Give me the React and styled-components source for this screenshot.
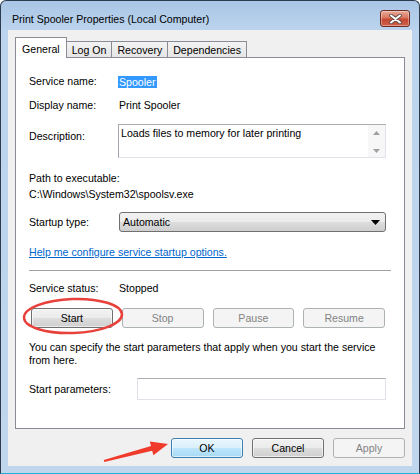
import React from 'react'
import styled, {createGlobalStyle} from 'styled-components'

const GlobalStyle = createGlobalStyle`
  html, body {
    margin: 0;
    padding: 0;
    background: #fff;
  }
  body {
    font-family: "Liberation Sans", Arial, sans-serif;
    font-size: 10.6px;
    color: #000;
  }
`

const Window = styled.div`
  position: relative;
  box-sizing: border-box;
  width: 420px;
  height: 474px;
  display: flex;
  flex-direction: column;
  background: linear-gradient(#a9c6e6 0, #bcd4ed 30px, #bfd6ec 100%);
  border: 1px solid #2d3b4c;
  border-bottom: 1px solid #1eb0da;
  border-radius: 6px 6px 0 0;
  overflow: hidden;
`

const TitleBar = styled.div`
  height: 29px;
  display: flex;
  align-items: flex-start;
  justify-content: space-between;
  padding: 9px 9px 0 11px;
  box-sizing: border-box;
`

const Title = styled.div`
  font-size: 10.6px;
  line-height: 20px;
  margin-top: -1px;
  color: #000;
  white-space: nowrap;
`

const CloseButton = styled.div`
  width: 30px;
  height: 17px;
  box-sizing: border-box;
  border: 1px solid #6e2c24;
  border-radius: 3px;
  background: linear-gradient(#e9ab9c 0%, #d9755f 45%, #c54832 55%, #d0604a 100%);
  box-shadow: inset 0 0 0 1px rgba(255, 255, 255, 0.35);
  display: flex;
  align-items: center;
  justify-content: center;
`

const Client = styled.div`
  flex: 1;
  margin: 0 7px 7px;
  background: #f0f0f0;
  padding: 7px 7px 0;
  display: flex;
  flex-direction: column;
`

const TabRow = styled.div`
  display: flex;
  align-items: flex-end;
  height: 20px;
  position: relative;
  z-index: 1;
`

const Tab = styled.div`
  box-sizing: border-box;
  height: ${p => (p.$active ? '21px' : '16px')};
  margin-bottom: ${p => (p.$active ? '-1px' : '0')};
  margin-right: -1px;
  padding: ${p => (p.$active ? '4px 6px 0' : '1px 5px 0')};
  border: 1px solid #898c95;
  border-bottom: none;
  background: ${p => (p.$active ? '#fff' : 'linear-gradient(#f3f3f3, #e5e5e5)')};
  white-space: nowrap;
  line-height: 14px;
  position: relative;
  z-index: ${p => (p.$active ? 2 : 1)};
`

const Panel = styled.div`
  box-sizing: border-box;
  height: 372px;
  background: #fff;
  border: 1px solid #898c95;
  padding: 0 18px 0 13px;
  display: flex;
  flex-direction: column;
`

const Row = styled.div`
  display: flex;
  align-items: ${p => p.$align || 'center'};
  margin-top: ${p => p.$top}px;
  line-height: 15px;
`

const Label = styled.div`
  width: ${p => p.$width || 90}px;
  flex: none;
  padding-top: ${p => p.$pad || 0}px;
`

const Selected = styled.span`
  background: #3399ff;
  color: #fff;
  line-height: 12px;
  display: inline-block;
  padding: 0 1px;
  margin-left: -1px;
`

const DescBox = styled.div`
  flex: 1;
  height: 34px;
  box-sizing: border-box;
  display: flex;
  border: 1px solid #e2e3ea;
  border-left-color: #a5a7ae;
  border-top-color: #abadb3;
`

const DescText = styled.div`
  flex: 1;
  padding: 1px 2px;
  line-height: 15px;
`

const ScrollCol = styled.div`
  width: 17px;
  background: #f7f7f7;
  display: flex;
  flex-direction: column;
  justify-content: space-between;
  align-items: center;
  padding: 6px 0 4px;
  box-sizing: border-box;
`

const Block = styled.div`
  margin-top: ${p => p.$top}px;
  line-height: ${p => p.$line}px;
`

const Combo = styled.div`
  flex: 1;
  height: 20px;
  box-sizing: border-box;
  border: 1px solid #707070;
  border-radius: 3px;
  background: linear-gradient(#f2f2f2 0%, #ebebeb 50%, #dddddd 51%, #cfcfcf 100%);
  display: flex;
  align-items: center;
  justify-content: space-between;
  padding: 0 5px 0 3px;
`

const Link = styled.a`
  color: #0066cc;
  text-decoration: underline;
  display: block;
  margin-top: 13px;
  line-height: 15px;
`

const Separator = styled.div`
  height: 1px;
  background: #a0a0a0;
  margin: 10px -5px 0 0;
`

const ButtonRow = styled.div`
  display: grid;
  grid-template-columns: repeat(4, 1fr);
  column-gap: 9px;
  margin: 12px 1px 0 2px;
`

const Button = styled.div`
  box-sizing: border-box;
  height: 20px;
  width: ${p => (p.$width ? `${p.$width}px` : 'auto')};
  border: 1px solid ${p => (p.$disabled ? '#adb2b5' : p.$default ? '#3c7fb1' : '#707070')};
  border-radius: 3px;
  background: ${p =>
    p.$disabled
      ? '#f4f4f4'
      : p.$default
      ? 'linear-gradient(#eaf6fd 0%, #d9f0fc 50%, #bee6fd 51%, #a7d9f5 100%)'
      : 'linear-gradient(#f2f2f2 0%, #ebebeb 50%, #dddddd 51%, #cfcfcf 100%)'};
  color: ${p => (p.$disabled ? '#838383' : '#000')};
  display: flex;
  align-items: center;
  justify-content: center;
  box-shadow: ${p => (p.$disabled ? 'none' : 'inset 0 0 0 1px rgba(255,255,255,0.6)')};
`

const Note = styled.div`
  margin-top: 13px;
  line-height: 13px;
  white-space: nowrap;
`

const InputBox = styled.div`
  flex: 1;
  height: 22px;
  box-sizing: border-box;
  border: 1px solid #e2e3ea;
  border-top-color: #abadb3;
`

const Footer = styled.div`
  display: flex;
  justify-content: flex-end;
  gap: 9px;
  margin-top: 9px;
`

const Overlay = styled.svg`
  position: absolute;
  left: -1px;
  top: -1px;
  pointer-events: none;
`

const App = () => {
  return (
    <Window>
      <GlobalStyle />
      <TitleBar>
        <Title>Print Spooler Properties (Local Computer)</Title>
        <CloseButton>
          <svg width="13" height="10" viewBox="0 0 13 10">
            <path d="M2 1.5 L11 8.5 M11 1.5 L2 8.5" stroke="#5a4a48" strokeWidth="3.6" strokeLinecap="round" />
            <path d="M2 1.5 L11 8.5 M11 1.5 L2 8.5" stroke="#fff" strokeWidth="2" strokeLinecap="round" />
          </svg>
        </CloseButton>
      </TitleBar>
      <Client>
        <TabRow>
          <Tab $active>General</Tab>
          <Tab>Log On</Tab>
          <Tab>Recovery</Tab>
          <Tab>Dependencies</Tab>
        </TabRow>
        <Panel>
          <Row $top={16}>
            <Label>Service name:</Label>
            <Selected>Spooler</Selected>
          </Row>
          <Row $top={9}>
            <Label>Display name:</Label>
            <div>Print Spooler</div>
          </Row>
          <Row $top={11} $align="flex-start">
            <Label $pad={5} $width={89}>Description:</Label>
            <DescBox>
              <DescText>Loads files to memory for later printing</DescText>
              <ScrollCol>
                <svg width="7" height="4" viewBox="0 0 7 4"><path d="M0 4 L3.5 0 L7 4 Z" fill="#a0a0a0" /></svg>
                <svg width="7" height="4" viewBox="0 0 7 4"><path d="M0 0 L3.5 4 L7 0 Z" fill="#a0a0a0" /></svg>
              </ScrollCol>
            </DescBox>
          </Row>
          <Block $top={12} $line={16}>
            <div>Path to executable:</div>
            <div>C:\Windows\System32\spoolsv.exe</div>
          </Block>
          <Row $top={10}>
            <Label>Startup type:</Label>
            <Combo>
              <span>Automatic</span>
              <svg width="9" height="5" viewBox="0 0 9 5"><path d="M0 0 L9 0 L4.5 5 Z" fill="#000" /></svg>
            </Combo>
          </Row>
          <Link>Help me configure service startup options.</Link>
          <Separator />
          <Row $top={10}>
            <Label>Service status:</Label>
            <div>Stopped</div>
          </Row>
          <ButtonRow>
            <Button>Start</Button>
            <Button $disabled>Stop</Button>
            <Button $disabled>Pause</Button>
            <Button $disabled>Resume</Button>
          </ButtonRow>
          <Note>
            You can specify the start parameters that apply when you start the service
            <br />
            from here.
          </Note>
          <Row $top={11}>
            <Label $width={108}>Start parameters:</Label>
            <InputBox />
          </Row>
        </Panel>
        <Footer>
          <Button $default $width={72}>OK</Button>
          <Button $width={72}>Cancel</Button>
          <Button $disabled $width={72}>Apply</Button>
        </Footer>
      </Client>
      <Overlay width="420" height="474" viewBox="0 0 420 474">
        <ellipse cx="73" cy="316" rx="49" ry="17" fill="none" stroke="#e8403a" strokeWidth="2.5" transform="rotate(-2 73 316)" />
        <polygon
          points="103.8,460.1 151,446 149.8,441.6 168,444 153.4,455.2 152.2,450.8 104.2,461.9"
          fill="#f03a2c"
        />
      </Overlay>
    </Window>
  )
}

export default App
